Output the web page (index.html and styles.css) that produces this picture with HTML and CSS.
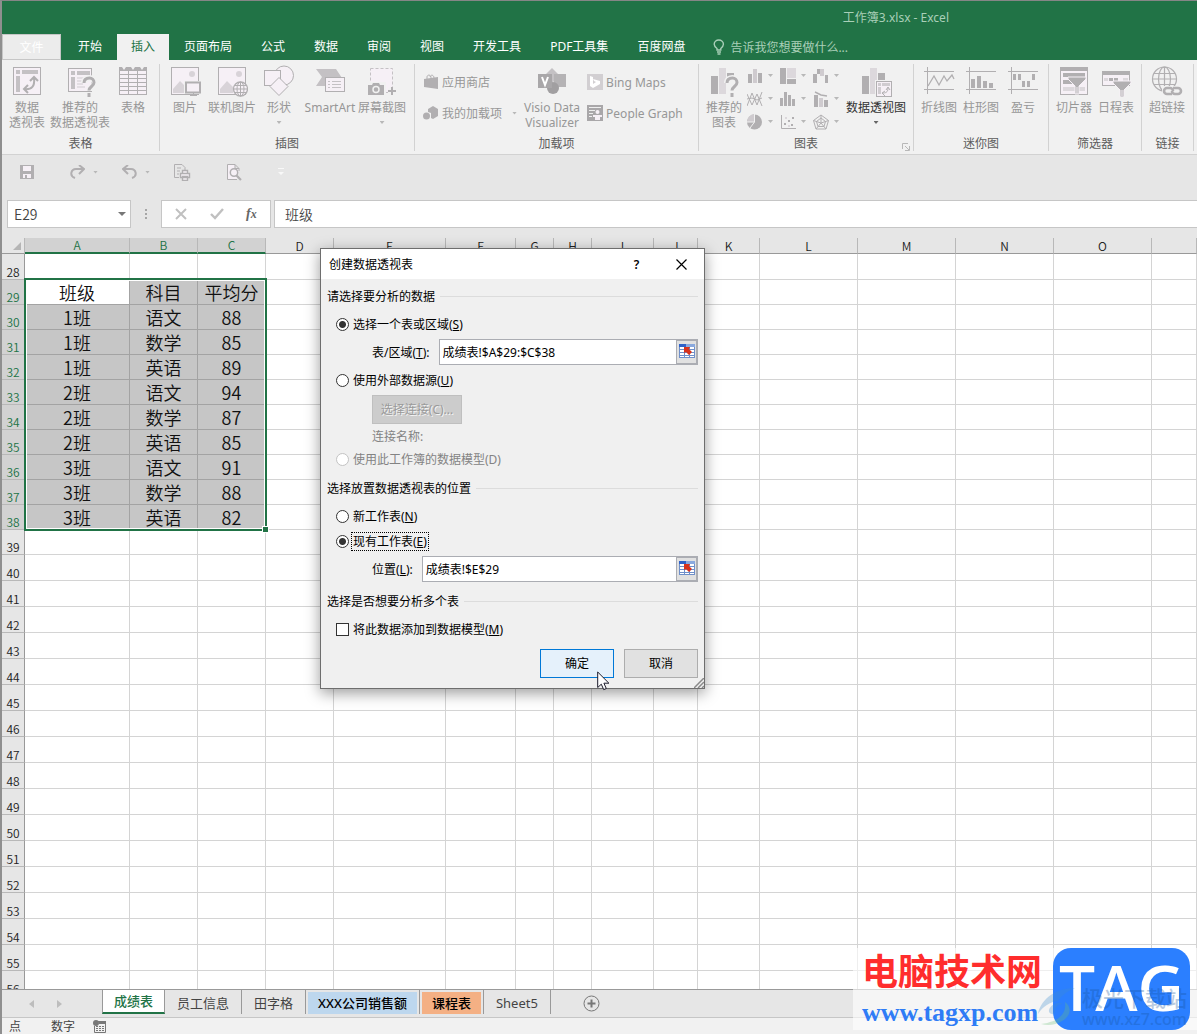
FILE: index.html
```html
<!DOCTYPE html>
<html lang="zh-CN">
<head>
    <meta charset="UTF-8">
    <meta name="viewport" content="width=device-width, initial-scale=1.0">
    <link rel="stylesheet" href="styles.css">
    <title>工作簿3.xlsx - Excel</title>
</head>
<body>
    <header class="title-bar">
        <h1 class="title-bar__name">工作簿3.xlsx - Excel</h1>
        <nav class="tabs">
            <button class="tabs__file" type="button">文件</button>
            <ul class="tabs__list">
                <li><button class="tabs__item" type="button">开始</button></li>
                <li><button class="tabs__item active" type="button">插入</button></li>
                <li><button class="tabs__item" type="button">页面布局</button></li>
                <li><button class="tabs__item" type="button">公式</button></li>
                <li><button class="tabs__item" type="button">数据</button></li>
                <li><button class="tabs__item" type="button">审阅</button></li>
                <li><button class="tabs__item" type="button">视图</button></li>
                <li><button class="tabs__item" type="button">开发工具</button></li>
                <li><button class="tabs__item" type="button">PDF工具集</button></li>
                <li><button class="tabs__item" type="button">百度网盘</button></li>
            </ul>
            <button class="tabs__tell" type="button">
                <svg width="12" height="16" viewBox="0 0 12 16" fill="none" stroke="#a9cfb8" stroke-width="1.4"><path d="M4 11V9.500C2 8 1.200 7 1.200 5.300a4.600 4.300 0 0 1 9.200 0C10.400 7 9.500 8 7.800 9.500V11zM4 13h4M4.500 15h3"/></svg>
                告诉我您想要做什么...
            </button>
        </nav>
    </header>

    <section class="ribbon">
        <div class="group">
            <div class="group__items">
                <button class="tool" type="button">
                    <svg width="32" height="32" viewBox="0 0 32 32"><rect x="2.500" y="2.500" width="27" height="27" fill="#f6f0f6" stroke="#b1afb1"/><path d="M5 5h4v4H5zM11 5h16v4H11zM5 11h4v16H5z" fill="#c4c1c4"/><path d="M13 24c8 1 11-3 10-11M19 16l4-4 4 4M17 20l-4 4 4 4" fill="none" stroke="#b1afb1" stroke-width="2"/></svg>
                    <span>数据<br>透视表</span>
                </button>
                <button class="tool" type="button">
                    <svg width="32" height="32" viewBox="0 0 32 32"><rect x="4.500" y="3.500" width="23" height="23" fill="#f6f0f6" stroke="#b1afb1"/><path d="M7 6h4v4H7zM13 6h13v4H13zM7 12h4v12H7z" fill="#c4c1c4"/><path d="M13 13h8M13 16h6M13 19h6M13 22h8" stroke="#d0ccd0"/><path d="M20 18c0-4 3-5 5.500-5s5 2 5 5c0 4-5 4-5 8" fill="none" stroke="#f1f1f1" stroke-width="6"/><path d="M20 18c0-4 3-5 5.500-5s4.500 2 4.500 4.500c0 4-5 4-5 8M25 28v4" fill="none" stroke="#b1afb1" stroke-width="3"/></svg>
                    <span>推荐的<br>数据透视表</span>
                </button>
                <button class="tool" type="button">
                    <svg width="32" height="32" viewBox="0 0 32 32"><rect x="2.500" y="2.500" width="27" height="27" fill="#f6f0f6" stroke="#b1afb1"/><path d="M2 2h28v4H2z" fill="#b1afb1"/><path d="M5 2h4L7 5zM14 2h4l-2 3zM23 2h4l-2 3z" fill="#f1f1f1"/><path d="M3 9.500h26M3 13.500h26M3 17.500h26M3 21.500h26M3 25.500h26M11.500 6v23M20.500 6v23" stroke="#b1afb1"/></svg>
                    <span>表格</span>
                </button>
            </div>
            <h2 class="group__name">表格</h2>
        </div>

        <div class="group">
            <div class="group__items">
                <button class="tool" type="button">
                    <svg width="32" height="32" viewBox="0 0 32 32"><rect x="2.500" y="2.500" width="27" height="27" fill="#f6f0f6" stroke="#b1afb1"/><circle cx="23" cy="9" r="3" fill="#d8d3d8"/><path d="M4 28V24l7-8 6 6v6z" fill="#d8d3d8"/><rect x="15" y="16" width="17" height="13" fill="#f1f1f1"/><rect x="17" y="17.500" width="14" height="10" fill="#f6f0f6" stroke="#b1afb1" stroke-width="2"/><path d="M21 30.500h7M24.500 28v3" stroke="#b1afb1"/></svg>
                    <span>图片</span>
                </button>
                <button class="tool" type="button">
                    <svg width="32" height="32" viewBox="0 0 32 32"><rect x="2.500" y="2.500" width="27" height="27" fill="#f6f0f6" stroke="#b1afb1"/><circle cx="23" cy="9" r="3" fill="#d8d3d8"/><path d="M4 28V24l7-8 6 6v6z" fill="#d8d3d8"/><circle cx="24.500" cy="24" r="7" fill="#f6f0f6" stroke="#b1afb1" stroke-width="1.300"/><path d="M24.500 17v14M18 24h13M19 20.500h11M19 27.500h11" stroke="#b1afb1"/><ellipse cx="24.500" cy="24" rx="3.500" ry="7" fill="none" stroke="#b1afb1"/></svg>
                    <span>联机图片</span>
                </button>
                <button class="tool" type="button">
                    <svg width="32" height="32" viewBox="0 0 32 32" fill="#f6f0f6" stroke="#b1afb1"><circle cx="21" cy="10.500" r="9.500"/><rect x="1.500" y="5.500" width="16" height="15"/><path d="M16 12.500l9 9-9 9-9-9z"/></svg>
                    <span>形状</span>
                    <i class="arrow"></i>
                </button>
                <button class="tool tool--wide" type="button">
                    <svg width="32" height="32" viewBox="0 0 32 32"><path d="M2 4h20l6 9H12v8H2l6-9z" fill="#c4c1c4"/><rect x="11.500" y="12.500" width="19" height="14" fill="#f6f0f6" stroke="#b1afb1"/><path d="M14 16.500h2M18 16.500h9M14 19.500h2M18 19.500h9M14 22.500h2M18 22.500h9" stroke="#c4c1c4"/></svg>
                    <span>SmartArt</span>
                </button>
                <button class="tool" type="button">
                    <svg width="32" height="32" viewBox="0 0 32 32"><rect x="4.500" y="3.500" width="22" height="24" fill="#f6f0f6" stroke="#c4c1c4" stroke-dasharray="3 2"/><path d="M1 17h19v14H1z" fill="#f1f1f1"/><path d="M2 20h4l1-2h6l1 2h4v10H2z" fill="#b1afb1"/><circle cx="10" cy="24.500" r="3" fill="#b1afb1" stroke="#f1f1f1" stroke-width="1.500"/><path d="M22 26h8M26 22v8" stroke="#f1f1f1" stroke-width="5"/><path d="M22 26h8M26 22v8" stroke="#b1afb1" stroke-width="2"/></svg>
                    <span>屏幕截图</span>
                    <i class="arrow"></i>
                </button>
            </div>
            <h2 class="group__name">插图</h2>
        </div>

        <div class="group">
            <div class="group__items group__items--addins">
                <div class="stack">
                    <button class="tool-row" type="button">
                        <svg width="16" height="16" viewBox="0 0 16 16"><path d="M1 5l14-2v12l-14-2z" fill="#b1afb1"/><path d="M4 6V3c0-2 3-3 4 0v3M7 3c1-3 4-2 4 1" fill="none" stroke="#b1afb1"/></svg>
                        应用商店
                    </button>
                    <button class="tool-row" type="button">
                        <svg width="16" height="16" viewBox="0 0 16 16"><path d="M5 4l5-3 5 3v7l-5 3-2-1V8L5 7z" fill="#b1afb1"/><circle cx="3.500" cy="11" r="3.500" fill="#b1afb1"/></svg>
                        我的加载项
                        <i class="arrow"></i>
                    </button>
                </div>
                <button class="tool" type="button">
                    <svg width="32" height="32" viewBox="0 0 32 32"><path d="M16 3l8 8-8 7-8-7z" fill="#c4c1c4"/><path d="M18 9h12v13H18z" fill="#b5b3b5"/><circle cx="17" cy="23" r="6" fill="#a19fa1"/><path d="M2 9h14v14H2z" fill="#a9a7a9"/><path d="M6 12l3 8 3-8" fill="none" stroke="#fff" stroke-width="2"/></svg>
                    <span>Visio Data<br>Visualizer</span>
                </button>
                <div class="stack">
                    <button class="tool-row" type="button">
                        <svg width="16" height="16" viewBox="0 0 16 16"><path d="M0 0h16v16H0z" fill="#d2cfd2"/><path d="M3 2l3 1v7l3-2-2-1-1-2 7 2v3l-7 4-3-2z" fill="#fff"/></svg>
                        Bing Maps
                    </button>
                    <button class="tool-row" type="button">
                        <svg width="16" height="16" viewBox="0 0 16 16"><path d="M0 0h16v16H0z" fill="#a9a7a9"/><path d="M2 2.500h12M2 5.500h6M2 8.500h4M2 11.500h3" stroke="#eee"/><circle cx="10.500" cy="7" r="2" fill="#f6f0f6"/><path d="M6 10h9v2h-2v3H8v-3H6z" fill="#f6f0f6"/></svg>
                        People Graph
                    </button>
                </div>
            </div>
            <h2 class="group__name">加载项</h2>
        </div>

        <div class="group">
            <div class="group__items">
                <button class="tool" type="button">
                    <svg width="32" height="32" viewBox="0 0 32 32"><path d="M3 11h7v18H3z" fill="#b1afb1"/><path d="M11 3h7v26h-7z" fill="#dcd8dc"/><path d="M19 8h7v5h-7z" fill="#b1afb1"/><path d="M19 18c0-4 3-5 5.500-5s4.500 2 4.500 4.500c0 4-5 4-5 8" fill="none" stroke="#f1f1f1" stroke-width="6"/><path d="M19 18c0-4 3-5 5.500-5s4.500 2 4.500 4.500c0 4-5 4-5 8M24 28v4" fill="none" stroke="#b1afb1" stroke-width="3"/></svg>
                    <span>推荐的<br>图表</span>
                </button>
                <div class="chart-grid">
                    <button class="chart" type="button" aria-label="柱形图"><svg width="16" height="16" viewBox="0 0 16 16"><path d="M1 6h4v9H1zM11 5h4v10h-4z" fill="#b1afb1"/><path d="M6 1h4v14H6z" fill="#cfcbcf"/></svg><i class="arrow"></i></button>
                    <button class="chart" type="button" aria-label="层次结构图"><svg width="16" height="16" viewBox="0 0 16 16"><path d="M0 0h6v16H0zM7 11h9v5H7z" fill="#b1afb1"/><path d="M7 0h9v10H7z" fill="#dcd8dc"/></svg><i class="arrow"></i></button>
                    <button class="chart" type="button" aria-label="瀑布图"><svg width="16" height="16" viewBox="0 0 16 16"><path d="M0 6h4v9H0zM4 1h3v5H4zM12 7h3v8h-3z" fill="#b1afb1"/><path d="M7 1h4v7H7z" fill="#cfcbcf"/></svg><i class="arrow"></i></button>
                    <button class="chart" type="button" aria-label="折线图"><svg width="16" height="16" viewBox="0 0 16 16" fill="none" stroke="#b1afb1"><path d="M0 15L5 2l5 12 5-13"/><path d="M0 3l5 11L10 3l5 12"/><path d="M0 8l5-1 5 2 5-2"/></svg><i class="arrow"></i></button>
                    <button class="chart" type="button" aria-label="统计图"><svg width="16" height="16" viewBox="0 0 16 16"><path d="M0 7h3v8H0zM4 1h3v14H4zM8 4h3v11H8zM12 8h3v7h-3z" fill="#b1afb1"/></svg><i class="arrow"></i></button>
                    <button class="chart" type="button" aria-label="组合图"><svg width="16" height="16" viewBox="0 0 16 16"><path d="M1 4h4v12H1zM11 9h4v7h-4z" fill="#b1afb1"/><path d="M6 7h4v9H6z" fill="#cfcbcf"/><path d="M2 1l6 3 6 1" fill="none" stroke="#b1afb1" stroke-width="1.500"/></svg><i class="arrow"></i></button>
                    <button class="chart" type="button" aria-label="饼图"><svg width="16" height="16" viewBox="0 0 16 16"><circle cx="7.500" cy="8" r="7.500" fill="#b1afb1"/><path d="M7 8V0a8 8 0 0 0-7 8z" fill="#cfcbcf"/><path d="M7.500 0v8H0M7.500 8L3 14" fill="none" stroke="#f1f1f1"/></svg><i class="arrow"></i></button>
                    <button class="chart" type="button" aria-label="散点图"><svg width="16" height="16" viewBox="0 0 16 16"><path d="M1.500 1v13.500H16" fill="none" stroke="#b1afb1"/><path d="M4 9h2v2H4zM8 6h2v2H8zM12 3h2v2h-2zM11 10h2v2h-2z" fill="#b1afb1"/><path d="M5 3h2v2H5zM8 11h2v2H8z" fill="#dcd8dc"/></svg><i class="arrow"></i></button>
                    <button class="chart" type="button" aria-label="雷达图"><svg width="16" height="16" viewBox="0 0 16 16" fill="none" stroke="#b1afb1"><path d="M8 1l7.500 5.500L13 15H3L.5 6.500zM8 4l4.500 3.500L11 12.500H5L3.500 7.500zM8 1v8M.5 6.500L8 9l7.500-2.500M3 15l5-6 5 6"/></svg><i class="arrow"></i></button>
                </div>
                <button class="tool tool--enabled" type="button">
                    <svg width="32" height="32" viewBox="0 0 32 32"><path d="M2 11h7v18H2z" fill="#b1afb1"/><path d="M10 3h7v26h-7z" fill="#dcd8dc"/><path d="M18 8h7v7h-7z" fill="#b1afb1"/><path d="M15 15h17v17H15z" fill="#f1f1f1"/><rect x="16.500" y="16.500" width="15" height="15" fill="#f6f0f6" stroke="#b1afb1"/><path d="M18 18h3v3h-3zM22 18h8v3h-8zM18 22h3v7h-3z" fill="#d0ccd0"/><path d="M23 28c4 0 5-2 5-5M26 25l2-3 2 3M25 26l-3 2 3 3" fill="none" stroke="#b1afb1"/></svg>
                    <span>数据透视图</span>
                    <i class="arrow"></i>
                </button>
            </div>
            <h2 class="group__name">图表</h2>
            <button class="launcher" type="button" aria-label="图表选项"><svg width="8" height="8" viewBox="0 0 8 8" fill="none" stroke="#b8b8b8"><path d="M.5 6V.5H6M3 3l4 4M7.500 3v4.500H3"/></svg></button>
        </div>

        <div class="group">
            <div class="group__items group__items--narrow">
                <button class="tool" type="button">
                    <svg width="32" height="32" viewBox="0 0 32 32" fill="none" stroke="#b1afb1"><path d="M1 6.500h30M1 24.500h30M4.500 2v27"/><path d="M5 21l6-10 5 9 5-9 3 5 5-6 2 4" stroke-width="1.300"/></svg>
                    <span>折线图</span>
                </button>
                <button class="tool" type="button">
                    <svg width="32" height="32" viewBox="0 0 32 32"><path d="M1 6.500h30M1 24.500h30M4.500 2v27" stroke="#b1afb1"/><path d="M6 14h4v9H6zM12 11h4v12h-4zM18 16h4v7h-4zM24 18h4v5h-4z" fill="#b1afb1"/></svg>
                    <span>柱形图</span>
                </button>
                <button class="tool" type="button">
                    <svg width="32" height="32" viewBox="0 0 32 32"><path d="M1 6.500h30M1 24.500h30M4.500 2v27" stroke="#b1afb1"/><path d="M6 9h3v6H6zM11 9h3v6h-3zM15 16h3v6h-3zM20 16h3v6h-3zM25 9h3v6h-3z" fill="#b1afb1"/></svg>
                    <span>盈亏</span>
                </button>
            </div>
            <h2 class="group__name">迷你图</h2>
        </div>

        <div class="group">
            <div class="group__items group__items--narrow">
                <button class="tool" type="button">
                    <svg width="32" height="32" viewBox="0 0 32 32"><rect x="2.500" y="2.500" width="27" height="27" fill="#f6f0f6" stroke="#b1afb1"/><path d="M2 2h28v4H2zM5 8h22v4H5z" fill="#b1afb1"/><path d="M5 15h15v4H5z" fill="#b1afb1"/><path d="M5 22h22v4H5z" fill="#dcd8dc"/><path d="M10 12h18v2l-7 7v8h-4v-8l-7-7z" fill="#b1afb1" stroke="#f6f0f6"/><path d="M19 22v7" stroke="#f6f0f6"/></svg>
                    <span>切片器</span>
                </button>
                <button class="tool" type="button">
                    <svg width="32" height="32" viewBox="0 0 32 32"><rect x="2.500" y="6.500" width="27" height="14" fill="#f6f0f6" stroke="#b1afb1"/><path d="M2 6h28v4H2z" fill="#b1afb1"/><path d="M4 13h4v3H4zM23 13h5v3h-5z" fill="#dcd8dc"/><path d="M9 13h4v3H9zM14 13h4v3h-4z" fill="#b1afb1"/><path d="M13 16h18v2l-7 7v7h-4v-7l-7-7z" fill="#b1afb1" stroke="#f6f0f6"/><path d="M22 25v6" stroke="#f6f0f6"/></svg>
                    <span>日程表</span>
                </button>
            </div>
            <h2 class="group__name">筛选器</h2>
        </div>

        <div class="group">
            <div class="group__items">
                <button class="tool" type="button">
                    <svg width="32" height="32" viewBox="0 0 32 32"><g fill="none" stroke="#b1afb1" stroke-width="1.200"><circle cx="13.500" cy="14" r="12"/><ellipse cx="13.500" cy="14" rx="6" ry="12"/><path d="M13.500 2v24M1.500 14h24M3 8.500h21M3 19.500h21"/></g><path d="M11 21h21v11H11z" fill="#f1f1f1"/><g fill="none" stroke="#b1afb1" stroke-width="2.600"><path d="M21 29h-5a3 3 0 0 1 0-6h3a3 3 0 0 1 3 3"/><path d="M22 23h5a3 3 0 0 1 0 6h-3a3 3 0 0 1-3-3"/></g></svg>
                    <span>超链接</span>
                </button>
            </div>
            <h2 class="group__name">链接</h2>
        </div>
    </section>

    <div class="quick">
        <button type="button" aria-label="保存"><svg width="14" height="14" viewBox="0 0 14 14"><path d="M0 0h14v14H0z" fill="#b1afb1"/><path d="M3 1h8v5H3zM3 9h8v4H3z" fill="#f6f0f6"/><path d="M5 10h2v3H5z" fill="#b1afb1"/></svg></button>
        <button type="button" aria-label="恢复"><svg width="15" height="14" viewBox="0 0 15 14" fill="none" stroke="#b1afb1" stroke-width="2"><path d="M5 13C-1 11 1 4 6 4h7M9 0l5 4-5 5"/></svg><i class="arrow"></i></button>
        <button type="button" aria-label="撤消"><svg width="15" height="14" viewBox="0 0 15 14" fill="none" stroke="#b1afb1" stroke-width="2"><path d="M10 13c6-2 4-9-1-9H2M6 0L1 4l5 5"/></svg><i class="arrow"></i></button>
        <button type="button" aria-label="快速打印"><svg width="17" height="17" viewBox="0 0 17 17" fill="none" stroke="#b1afb1"><path d="M5 13.500H.5V.5H8l3 3V6M3 4h4M3 7h3M3 10h2"/><path d="M8.500 9V6.500h5V9M6.500 9.500h9v4h-9zM8.500 12.500h5v4h-5z" fill="#f6f0f6" stroke-width="1.400"/></svg></button>
        <button type="button" aria-label="打印预览"><svg width="15" height="17" viewBox="0 0 15 17" fill="none" stroke="#b1afb1"><path d="M10 15.500H.5V.5H8l4 4V7M8 .5v4h4" fill="#f6f0f6"/><circle cx="7" cy="8.500" r="3.700" fill="#f6f0f6" stroke-width="1.500"/><path d="M9.500 11.500L14 16" stroke-width="2.200"/></svg></button>
        <button type="button" aria-label="自定义快速访问工具栏"><svg width="6" height="8" viewBox="0 0 6 8" fill="#f8f8f8"><path d="M0 0h6v1H0zM0 4h6L3 7z"/></svg></button>
    </div>

    <div class="formula-bar">
        <div class="name-box">
            <input type="text" value="E29" aria-label="名称框">
            <i class="arrow arrow--big"></i>
        </div>
        <span class="formula-bar__dots"></span>
        <div class="formula-bar__actions">
            <button type="button" aria-label="取消"><svg width="12" height="12" viewBox="0 0 12 12" stroke="#c0c0c0" stroke-width="2"><path d="M1 1l10 10M11 1L1 11"/></svg></button>
            <button type="button" aria-label="输入"><svg width="14" height="12" viewBox="0 0 14 12" fill="none" stroke="#c0c0c0" stroke-width="2.400"><path d="M1 6l4 4 8-9"/></svg></button>
            <button class="fx" type="button">f<small>x</small></button>
        </div>
        <input class="formula-bar__text" type="text" value="班级" aria-label="编辑栏">
    </div>

    <main class="sheet">
        <table class="grid">
            <colgroup>
                <col class="col-row"><col class="col-a"><col class="col-b"><col class="col-b"><col class="col-b">
                <col class="col-e"><col class="col-f"><col class="col-g"><col class="col-g"><col class="col-i">
                <col class="col-j"><col class="col-i"><col class="col-l"><col class="col-l"><col class="col-l"><col class="col-l"><col>
            </colgroup>
            <thead>
                <tr>
                    <th class="corner"><svg width="8" height="8" viewBox="0 0 8 8"><path d="M8 0v8H0z" fill="#b5b5b5"/></svg></th>
                    <th class="picked">A</th><th class="picked">B</th><th class="picked">C</th><th>D</th><th>E</th><th>F</th><th>G</th><th>H</th><th>I</th><th>J</th><th>K</th><th>L</th><th>M</th><th>N</th><th>O</th><th></th>
                </tr>
            </thead>
            <tbody id="rows"></tbody>
        </table>
        <div class="selection"><span class="selection__handle"></span></div>
    </main>

    <footer>
        <nav class="sheets">
            <div class="sheets__nav">
                <button type="button" aria-label="上一个"><svg width="5" height="8" viewBox="0 0 5 8"><path d="M5 0v8L0 4z" fill="#bdbdbd"/></svg></button>
                <button type="button" aria-label="下一个"><svg width="5" height="8" viewBox="0 0 5 8"><path d="M0 0v8l5-4z" fill="#bdbdbd"/></svg></button>
            </div>
            <ul class="sheets__list">
                <li class="current"><button type="button">成绩表</button></li>
                <li><button type="button">员工信息</button></li>
                <li><button type="button">田字格</button></li>
                <li><button class="blue" type="button">XXX公司销售额</button></li>
                <li><button class="orange" type="button">课程表</button></li>
                <li><button type="button">Sheet5</button></li>
            </ul>
            <button class="sheets__add" type="button" aria-label="新工作表"><svg width="17" height="17" viewBox="0 0 17 17" fill="none" stroke="#777"><circle cx="8.500" cy="8.500" r="7.500"/><path d="M4.500 8.500h8M8.500 4.500v8" stroke-width="2"/></svg></button>
        </nav>
        <div class="status">
            <span>点</span>
            <span>数字</span>
            <svg width="13" height="13" viewBox="0 0 13 13"><path d="M5 1.500h7.500v11h-11V6" fill="none" stroke="#777"/><path d="M6 1h7v3H6z" fill="#777"/><circle cx="3" cy="3" r="3" fill="#777"/><path d="M3 6.500h8M3 8.500h8M3 10.500h8" stroke="#777" stroke-dasharray="2 1"/></svg>
        </div>
    </footer>

    <form class="dialog" role="dialog" aria-labelledby="dialog-title">
        <div class="dialog__title">
            <h2 id="dialog-title">创建数据透视表</h2>
            <button type="button">?</button>
            <button type="button" aria-label="关闭"><svg width="11" height="11" viewBox="0 0 11 11" stroke="#000" stroke-width="1.200"><path d="M.5 .5l10 10M10.500 .5l-10 10"/></svg></button>
        </div>
        <div class="dialog__body">
            <section class="options">
                <h3 class="options__title">请选择要分析的数据</h3>
                <label class="option"><input type="radio" name="source" checked><span>选择一个表或区域(<u>S</u>)</span></label>
                <div class="field">
                    <label for="range">表/区域(<u>T</u>):</label>
                    <div class="field__box">
                        <input id="range" type="text" value="成绩表!$A$29:$C$38">
                        <button type="button" aria-label="选择区域"><svg width="16" height="14" viewBox="0 0 16 14"><path d="M0 0h16v14H0z" fill="#fff"/><path d="M0 0h7v3H0z" fill="#2f62c9"/><path d="M7 0h9v3H7z" fill="#8aa9de"/><path d="M0 5.500h16M0 8.500h16M0 11.500h16M0 13.500h16M.5 3v11M5.500 3v11M10.500 3v11M15.500 3v11" stroke="#6f8fc9"/><path d="M5 3h6l-1 2 3 3-3 3-3-3-2 1z" fill="#d8321c"/></svg></button>
                    </div>
                </div>
                <label class="option"><input type="radio" name="source"><span>使用外部数据源(<u>U</u>)</span></label>
                <button class="connect" type="button" disabled>选择连接(C)...</button>
                <p class="connect-name">连接名称:</p>
                <label class="option option--disabled"><input type="radio" name="source" disabled><span>使用此工作簿的数据模型(D)</span></label>
            </section>
            <section class="options">
                <h3 class="options__title">选择放置数据透视表的位置</h3>
                <label class="option"><input type="radio" name="target"><span>新工作表(<u>N</u>)</span></label>
                <label class="option option--focus"><input type="radio" name="target" checked><span>现有工作表(<u>E</u>)</span></label>
                <div class="field">
                    <label for="place">位置(<u>L</u>):</label>
                    <div class="field__box">
                        <input id="place" type="text" value="成绩表!$E$29">
                        <button type="button" aria-label="选择位置"><svg width="16" height="14" viewBox="0 0 16 14"><path d="M0 0h16v14H0z" fill="#fff"/><path d="M0 0h7v3H0z" fill="#2f62c9"/><path d="M7 0h9v3H7z" fill="#8aa9de"/><path d="M0 5.500h16M0 8.500h16M0 11.500h16M0 13.500h16M.5 3v11M5.500 3v11M10.500 3v11M15.500 3v11" stroke="#6f8fc9"/><path d="M5 3h6l-1 2 3 3-3 3-3-3-2 1z" fill="#d8321c"/></svg></button>
                    </div>
                </div>
            </section>
            <section class="options">
                <h3 class="options__title">选择是否想要分析多个表</h3>
                <label class="option"><input type="checkbox"><span>将此数据添加到数据模型(<u>M</u>)</span></label>
            </section>
            <div class="dialog__buttons">
                <button class="primary" type="button">确定</button>
                <button type="button">取消</button>
            </div>
        </div>
        <svg class="dialog__grip" width="10" height="10" viewBox="0 0 10 10" stroke="#8a8a8a" stroke-width="1.500"><path d="M0 10L10 0M4 10l6-6M8 10l2-2"/></svg>
        <svg class="pointer" width="13" height="20" viewBox="0 0 13 20"><path d="M.7 1v15.500l3.600-3.300 2.400 5.400 2.600-1.100-2.400-5.300h5z" fill="#fff" stroke="#1a1a2a"/></svg>
    </form>

    <aside class="mark">
        <div class="mark__text">
            <strong>电脑技术网</strong>
            <span>www.tagxp.com</span>
        </div>
        <div class="mark__tag">TAG</div>
        <div class="mark__under">
            <svg width="42" height="42" viewBox="0 0 42 42"><path d="M1 28C4 12 20 2 38 2c-9 4-14 8-17 13C13 16 6 20 1 28z" fill="#3f8fd0"/><path d="M4 38c16-2 26-9 24-22 7 5 6 14-3 19-6 4-14 5-21 3z" fill="#6fbf7a"/><path d="M12 24c2-6 10-9 14-6-5 0-8 3-8 8 0 4-7 2-6-2z" fill="#3f8fd0"/></svg>
            <p>极光下载站<span>www.xz7.com</span></p>
        </div>
    </aside>

    <script src="script.js"></script>
</body>
</html>
```
FILE: styles.css
```css
* {
    box-sizing: border-box;
}
body {
    margin: 0;
    height: 100vh;
    display: flex;
    flex-direction: column;
    position: relative;
    overflow: hidden;
    border-top: 1px solid #868686;
    border-left: 2px solid #8f8f8f;
    background-color: #e6e6e6;
    color: #444444;
    font-family: "Noto Sans", "Noto Sans CJK SC", sans-serif;
    font-size: 12px;
    line-height: 15px;
}
button,
input {
    margin: 0;
    padding: 0;
    border: none;
    background: none;
    color: inherit;
    font: inherit;
}
h1,
h2,
h3,
p,
ul {
    margin: 0;
    padding: 0;
    font-size: 12px;
    font-weight: normal;
    list-style: none;
}
svg {
    display: block;
    flex: none;
}
.arrow {
    display: block;
    width: 5px;
    height: 3px;
    flex: none;
    background-color: #b8b8b8;
    clip-path: polygon(0 0, 100% 0, 50% 100%);
}
.arrow--big {
    width: 8px;
    height: 4px;
    background-color: #777777;
}

/* title bar and ribbon tabs */
.title-bar {
    background-color: #217346;
}
.title-bar__name {
    height: 33px;
    padding-right: 248px;
    line-height: 33px;
    text-align: right;
    color: #a9cfb8;
}
.tabs {
    display: flex;
    height: 26px;
    color: #ffffff;
}
.tabs__file {
    width: 59px;
    margin-right: 3px;
    border: 1px solid #c6c6c6;
    background-color: #ececec;
}
.tabs__list {
    display: flex;
    gap: 1px;
}
.tabs__item {
    height: 26px;
    padding: 0 14px 2px;
    white-space: nowrap;
}
.tabs__item.active {
    background-color: #f1f1f1;
    color: #217346;
}
.tabs__tell {
    display: flex;
    align-items: center;
    gap: 5px;
    margin-left: 14px;
    color: #a9cfb8;
    white-space: nowrap;
}

/* ribbon */
.ribbon {
    display: grid;
    grid-template-columns: 158px 255px 284px 215px 135px 93px 52px;
    height: 95px;
    padding: 4px 0 3px;
    border-bottom: 1px solid #d2d2d2;
    background-color: #f1f1f1;
}
.group {
    display: flex;
    flex-direction: column;
    position: relative;
    border-right: 1px solid #d2d2d2;
}
.group__items {
    display: flex;
    flex: 1;
    padding: 0 2px;
}
.group__items--narrow {
    padding: 0 4px;
}
.group__items--addins {
    padding: 0 8px;
    gap: 7px;
}
.group__name {
    text-align: center;
    color: #5c5c5c;
}
.tool {
    display: flex;
    flex-direction: column;
    align-items: center;
    min-width: 46px;
    padding-top: 1px;
    color: #979797;
    white-space: nowrap;
}
.group__items--narrow .tool {
    min-width: 42px;
}
.tool span {
    padding-top: 3px;
}
.tool .arrow {
    margin-top: 6px;
}
.tool--wide {
    min-width: 56px;
}
.tool--enabled {
    color: #333333;
}
.tool--enabled .arrow {
    background-color: #666666;
}
.stack {
    display: flex;
    flex-direction: column;
    gap: 15px;
    padding-top: 10px;
}
.tool-row {
    display: flex;
    align-items: center;
    gap: 3px;
    height: 16px;
    color: #979797;
    white-space: nowrap;
}
.tool-row .arrow {
    margin-left: 7px;
}
.chart-grid {
    display: grid;
    grid-template-columns: repeat(3, 33px);
    grid-auto-rows: 23px;
}
.chart {
    display: flex;
    align-items: center;
    gap: 5px;
}
.launcher {
    position: absolute;
    right: 3px;
    bottom: 0;
}

/* quick access bar */
.quick {
    display: flex;
    align-items: center;
    height: 34px;
    padding-left: 18px;
}
.quick button {
    display: flex;
    align-items: center;
    gap: 8px;
    margin-right: 36px;
}
.quick button:has(.arrow) {
    margin-right: 24px;
}

/* formula bar */
.formula-bar {
    display: flex;
    height: 28px;
    margin: 11px 0 10px;
    padding-left: 5px;
    font-family: "Noto Sans CJK SC", sans-serif;
    font-size: 14px;
    font-weight: 350;
}
.name-box {
    display: flex;
    align-items: center;
    width: 124px;
    padding: 0 4px 0 6px;
    border: 1px solid #c6c6c6;
    background-color: #ffffff;
}
.name-box input {
    flex: 1;
    min-width: 0;
}
.formula-bar__dots {
    width: 2px;
    margin: 9px 14px;
    background: repeating-linear-gradient(#a6a6a6 0 2px, transparent 2px 4px);
}
.formula-bar__actions {
    display: flex;
    align-items: center;
    justify-content: space-around;
    width: 110px;
    padding: 0 2px;
    border: 1px solid #c6c6c6;
    background-color: #ffffff;
}
.fx {
    font-family: "Liberation Serif", serif;
    font-style: italic;
    font-weight: bold;
    color: #666666;
}
.fx small {
    font-size: 12px;
}
.formula-bar__text {
    flex: 1;
    min-width: 0;
    margin-left: 3px;
    padding-left: 10px;
    border: 1px solid #c6c6c6;
    border-right: none;
    background-color: #ffffff;
}

/* cells */
.sheet {
    flex: 1;
    min-height: 0;
    position: relative;
    overflow: hidden;
    background-color: #ffffff;
    font-family: "Noto Sans CJK SC", sans-serif;
}
.grid {
    width: 100%;
    table-layout: fixed;
    border-spacing: 0;
}
.grid th,
.grid td {
    height: 26px;
    padding: 0;
    border-right: 1px solid #d4d4d4;
    border-bottom: 1px solid #d4d4d4;
    text-align: center;
}
.grid th {
    background-color: #e6e6e6;
    border-color: #b8b8b8;
    font-weight: 350;
    color: #222222;
}
.grid thead th {
    height: 16px;
    border-bottom-color: #999999;
    line-height: 14px;
}
.grid tbody th {
    vertical-align: bottom;
    line-height: 14px;
    border-right-color: #999999;
}
.grid .short th,
.grid .short td {
    height: 25px;
}
.grid .picked {
    background-color: #d2d2d2;
    color: #217346;
}
.grid thead .picked {
    border-bottom: 2px solid #217346;
}
.corner svg {
    margin-left: 11px;
}
.grid .filled {
    background-color: #c6c6c6;
    border-color: #a3a3a3;
    color: #111111;
    font-size: 18px;
    font-weight: 350;
    line-height: 24px;
}
.grid .filled.start {
    background-color: #ffffff;
}
.col-row { width: 23px; }
.col-a { width: 105px; }
.col-b { width: 68px; }
.col-e { width: 112px; }
.col-f { width: 70px; }
.col-g { width: 38px; }
.col-i { width: 62px; }
.col-j { width: 44px; }
.col-l { width: 98px; }
.selection {
    position: absolute;
    top: 40px;
    left: 22px;
    width: 243px;
    height: 253px;
    border: 2px solid #217346;
    box-shadow: inset 0 0 0 1px #ffffff;
}
.selection__handle {
    position: absolute;
    right: -3px;
    bottom: -3px;
    width: 5px;
    height: 5px;
    background-color: #217346;
    box-shadow: 0 0 0 1px #ffffff;
}

/* sheet tabs and status */
.sheets {
    display: flex;
    align-items: center;
    height: 28px;
    border-top: 1px solid #999999;
    font-size: 13px;
}
.sheets__nav {
    display: flex;
    gap: 23px;
    width: 100px;
    padding-left: 27px;
}
.sheets__list {
    display: flex;
    align-self: flex-start;
    font-size: 13px;
}
.sheets__list li {
    height: 24px;
    padding: 2px 2px 0;
    border-right: 1px solid #999999;
}
.sheets__list button {
    height: 22px;
    padding: 0 10px;
    white-space: nowrap;
}
.sheets__list .current {
    padding: 0 1px;
    border-left: 1px solid #999999;
    border-bottom: 2px solid #217346;
    background-color: #ffffff;
    color: #217346;
    font-weight: 500;
}
.sheets__list .blue {
    background-color: #bdd7ee;
    color: #000000;
    font-weight: 500;
}
.sheets__list .orange {
    background-color: #f4b084;
    color: #000000;
    font-weight: 500;
}
.sheets__add {
    margin-left: 32px;
}
.status {
    display: flex;
    align-items: center;
    height: 17px;
    padding-left: 7px;
    border-top: 1px solid #c6c6c6;
    background-color: #f1f1f1;
}
.status span + span {
    margin: 0 18px 0 30px;
}

/* dialog */
.dialog {
    position: absolute;
    top: 247px;
    left: 318px;
    width: 385px;
    border: 1px solid #6e6e6e;
    background-color: #f0f0f0;
    box-shadow: 0 4px 14px rgba(0, 0, 0, 0.4);
    color: #000000;
}
.dialog__title {
    display: flex;
    align-items: center;
    height: 30px;
    padding-left: 8px;
    background-color: #ffffff;
}
.dialog__title h2 {
    flex: 1;
}
.dialog__title button {
    display: flex;
    justify-content: center;
    width: 45px;
    font-weight: 600;
}
.dialog__body {
    display: flex;
    flex-direction: column;
    gap: 10px;
    padding: 8px 6px 10px;
}
.options {
    display: flex;
    flex-direction: column;
    gap: 5px;
}
.options__title {
    display: flex;
    align-items: center;
    gap: 5px;
    height: 18px;
    margin-bottom: 4px;
}
.options__title::after {
    content: "";
    flex: 1;
    height: 1px;
    background-color: #dcdcdc;
}
.option {
    display: flex;
    align-items: center;
    gap: 2px;
    height: 20px;
    padding-left: 9px;
}
.option span {
    padding: 1px;
    border: 1px solid transparent;
}
.option--focus span {
    border: 1px dotted #000000;
}
.option input {
    appearance: none;
    width: 13px;
    height: 13px;
    border: 1px solid #333333;
    background-color: #ffffff;
}
.option input[type="radio"] {
    border-radius: 50%;
}
.option input:checked {
    background-image: radial-gradient(circle, #333333 3px, transparent 4px);
}
.option--disabled,
.connect-name {
    color: #838383;
}
.option--disabled input {
    border-color: #c3c3c3;
}
.field {
    display: flex;
    align-items: center;
    gap: 9px;
    height: 26px;
    padding-left: 45px;
}
.field__box {
    display: flex;
    flex: 1;
    height: 26px;
    border: 1px solid #abadb3;
    background-color: #ffffff;
}
.field__box input {
    flex: 1;
    min-width: 0;
    padding-left: 3px;
}
.field__box button {
    width: 21px;
    padding: 0 2px 2px;
    border: 1px solid #abadb3;
    background-color: #e1e1e1;
}
.connect {
    width: 90px;
    height: 29px;
    margin-left: 45px;
    border: 1px solid #bfbfbf;
    background-color: #cccccc;
    color: #9a9a9a;
    text-shadow: 1px 1px 0 #f4f4f4;
}
.connect-name {
    padding-left: 45px;
}
.dialog__buttons {
    display: flex;
    justify-content: flex-end;
    gap: 10px;
}
.dialog__buttons button {
    width: 74px;
    height: 29px;
    border: 1px solid #adadad;
    background-color: #e1e1e1;
}
.dialog__buttons .primary {
    border-color: #0078d7;
    background-color: #e5f1fb;
}
.dialog__grip {
    position: absolute;
    right: 0;
    bottom: 0;
}
.pointer {
    position: absolute;
    left: 276px;
    top: 422px;
}

/* site mark */
.mark {
    position: absolute;
    right: 0;
    bottom: 4px;
    display: flex;
    width: 344px;
    height: 82px;
    padding: 0 7px 0 9px;
    background-color: rgba(255, 255, 255, 0.6);
}
.mark__text {
    display: flex;
    flex-direction: column;
    width: 191px;
}
.mark__text strong {
    color: #ff2d2d;
    font-size: 36px;
    line-height: 48px;
    white-space: nowrap;
}
.mark__text span {
    color: #2f7cf6;
    font-family: "Liberation Serif", serif;
    font-size: 26px;
    font-weight: bold;
    line-height: 34px;
}
.mark__tag {
    flex: 1;
    border-radius: 18px;
    background-color: #2b7fff;
    color: #ffffff;
    font-family: "Open Sans", sans-serif;
    font-size: 64px;
    font-weight: 600;
    line-height: 78px;
    text-align: center;
}
.mark__under {
    position: absolute;
    right: 10px;
    bottom: 2px;
    display: flex;
    gap: 3px;
    opacity: 0.3;
    color: #17549c;
}
.mark__under p {
    font-size: 21px;
    line-height: 24px;
    font-weight: 500;
}
.mark__under span {
    display: block;
    font-size: 16px;
    line-height: 18px;
}
```
FILE: script.js
```js
const COLUMNS = 16;
const data = {
    29: ['班级', '科目', '平均分'],
    30: ['1班', '语文', '88'],
    31: ['1班', '数学', '85'],
    32: ['1班', '英语', '89'],
    33: ['2班', '语文', '94'],
    34: ['2班', '数学', '87'],
    35: ['2班', '英语', '85'],
    36: ['3班', '语文', '91'],
    37: ['3班', '数学', '88'],
    38: ['3班', '英语', '82']
};
const body = document.getElementById('rows');

for (let number = 28; number <= 56; number++) {
    const row = body.insertRow();
    const values = data[number] || [];
    // rows 29-39 are a pixel lower than the rest
    if (number > 28 && number < 40) row.className = 'short';

    const head = document.createElement('th');
    head.textContent = number;
    if (values.length) head.className = 'picked';
    row.appendChild(head);

    for (let i = 0; i < COLUMNS; i++) {
        const cell = row.insertCell();
        if (values[i]) {
            cell.textContent = values[i];
            cell.className = number === 29 && i === 0 ? 'filled start' : 'filled';
        }
    }
}
```
